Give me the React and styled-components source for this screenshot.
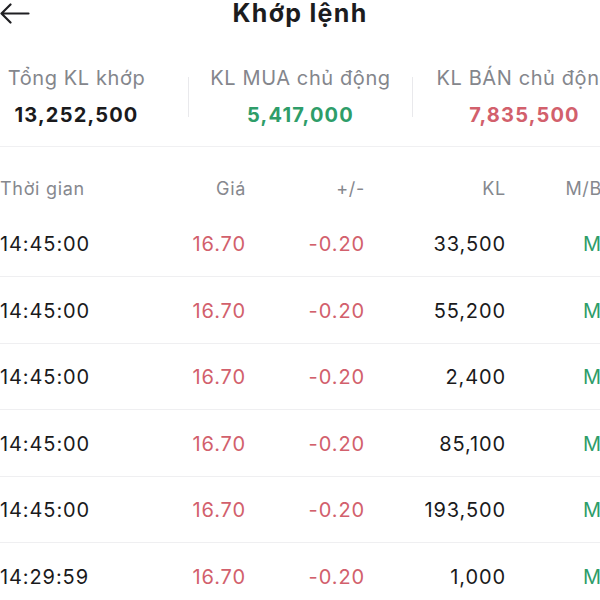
import React from "react";
import styled, { createGlobalStyle } from "styled-components";

const Global = createGlobalStyle`
  html, body {
    margin: 0;
    padding: 0;
    background: #ffffff;
    overflow: hidden;
  }
  body {
    font-family: Inter, "Noto Sans", "Liberation Sans", sans-serif;
    -webkit-font-smoothing: antialiased;
  }
`;

const Page = styled.div`
  width: 600px;
  height: 600px;
  overflow: hidden;
  background: #fff;
`;

const Header = styled.header`
  display: grid;
  grid-template-columns: 1fr auto 1fr;
  align-items: center;
  height: 26px;
`;

const BackButton = styled.button`
  justify-self: start;
  display: flex;
  align-items: center;
  padding: 0;
  margin: 0;
  border: 0;
  background: none;
  color: #1f1f22;
  height: 26px;
`;

const Title = styled.h1`
  margin: 0;
  font-size: 25px;
  line-height: 26px;
  font-weight: 700;
  color: #1c1c1e;
  letter-spacing: 1.3px;
`;

const Summary = styled.section`
  display: flex;
  align-items: center;
  margin-left: -35px;
  padding: 40px 0 19px;
  border-bottom: 1px solid #f0f0f2;
  width: 640px;
`;

const Stat = styled.div`
  flex: 0 0 223px;
  display: flex;
  flex-direction: column;
  align-items: center;
  gap: 13px;
  white-space: nowrap;
`;

const StatLabel = styled.div`
  font-size: 20px;
  line-height: 24px;
  color: #84868c;
  font-weight: 400;
  letter-spacing: 0.6px;
`;

const StatValue = styled.div`
  font-size: 20px;
  line-height: 24px;
  font-weight: 700;
  letter-spacing: 1.2px;
  color: ${(p) => p.$color};
`;

const Divider = styled.div`
  flex: 0 0 1px;
  height: 40px;
  background: #e9e9ec;
`;

const Table = styled.div`
  width: 602px;
`;

const Row = styled.div`
  display: grid;
  grid-template-columns: 150px 96px 119px 141px 96px;
  align-items: center;
  box-sizing: border-box;
  height: ${(p) => (p.$head ? "63.5px" : "66.5px")};
  padding-top: ${(p) => (p.$head ? "20px" : "2px")};
  border-bottom: ${(p) => (p.$head ? "none" : "1px solid #efeff1")};
`;

const HeadCell = styled.div`
  font-size: 18px;
  line-height: 24px;
  color: #86888e;
  text-align: ${(p) => p.$align || "right"};
  letter-spacing: 0.7px;
  white-space: nowrap;
`;

const Cell = styled.div`
  font-size: 20px;
  line-height: 24px;
  color: ${(p) => p.$color || "#1a1a1c"};
  text-align: ${(p) => p.$align || "right"};
  letter-spacing: 0.9px;
  white-space: nowrap;
`;

const RED = "#d2606c";
const GREEN = "#2e9d69";

const rows = [
  ["14:45:00", "16.70", "-0.20", "33,500", "M"],
  ["14:45:00", "16.70", "-0.20", "55,200", "M"],
  ["14:45:00", "16.70", "-0.20", "2,400", "M"],
  ["14:45:00", "16.70", "-0.20", "85,100", "M"],
  ["14:45:00", "16.70", "-0.20", "193,500", "M"],
  ["14:29:59", "16.70", "-0.20", "1,000", "M"],
];

function BackArrow() {
  return (
    <svg width="30" height="24" viewBox="0 0 30 24" fill="none">
      <path
        d="M28.5 12.5H1.5M10.5 3.5L1.5 12.5L10.5 21.5"
        stroke="currentColor"
        strokeWidth="2.2"
        strokeLinecap="round"
        strokeLinejoin="round"
      />
    </svg>
  );
}

export default function App() {
  return (
    <Page>
      <Global />
      <Header>
        <BackButton aria-label="Quay lại">
          <BackArrow />
        </BackButton>
        <Title>Khớp lệnh</Title>
        <span />
      </Header>

      <Summary>
        <Stat>
          <StatLabel>Tổng KL khớp</StatLabel>
          <StatValue $color="#1a1a1c">13,252,500</StatValue>
        </Stat>
        <Divider />
        <Stat>
          <StatLabel>KL MUA chủ động</StatLabel>
          <StatValue $color={GREEN}>5,417,000</StatValue>
        </Stat>
        <Divider />
        <Stat>
          <StatLabel>KL BÁN chủ động</StatLabel>
          <StatValue $color={RED}>7,835,500</StatValue>
        </Stat>
      </Summary>

      <Table>
        <Row $head>
          <HeadCell $align="left">Thời gian</HeadCell>
          <HeadCell>Giá</HeadCell>
          <HeadCell>+/-</HeadCell>
          <HeadCell>KL</HeadCell>
          <HeadCell>M/B</HeadCell>
        </Row>
        {rows.map((r, i) => (
          <Row key={i}>
            <Cell $align="left">{r[0]}</Cell>
            <Cell $color={RED}>{r[1]}</Cell>
            <Cell $color={RED}>{r[2]}</Cell>
            <Cell>{r[3]}</Cell>
            <Cell $color={GREEN}>{r[4]}</Cell>
          </Row>
        ))}
      </Table>
    </Page>
  );
}
